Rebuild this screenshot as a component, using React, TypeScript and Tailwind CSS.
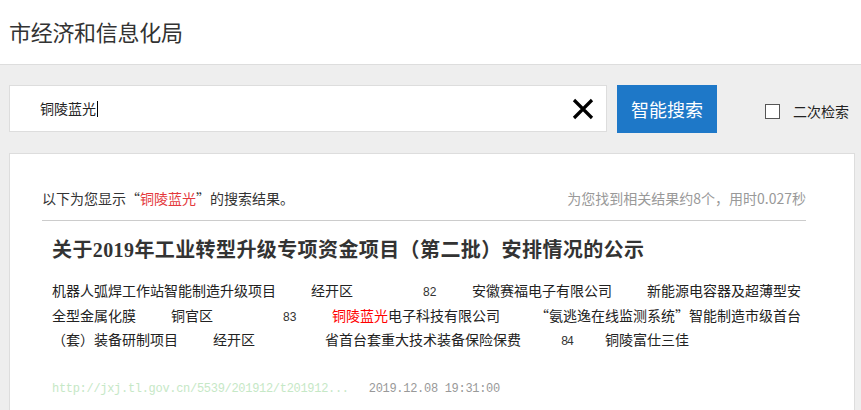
import React from "react";

const cjk = "font-['Microsoft_YaHei','Noto_Sans_CJK_SC',sans-serif]";

const Num = ({ children, w, ml, small }: { children: React.ReactNode; w: string; ml: string; small?: boolean }) => (
  <span
    className={`${ml} ${w} inline-block shrink-0 ${
      small ? "font-['Liberation_Mono',monospace] text-[12px] tracking-[-1.5px]" : "font-['Liberation_Sans',sans-serif] text-[12px]"
    } text-[#333]`}
  >
    {children}
  </span>
);

const App = () => {
  return (
    <div className={`w-[861px] h-[410px] overflow-hidden bg-[#eeeeee] ${cjk} text-[#333]`}>
      {/* header */}
      <div className="h-[65px] bg-white border-b border-[#dddddd] px-[9px] flex items-center">
        <h1 className="text-[22px] text-[#333] tracking-[-0.3px] pb-[1px]">市经济和信息化局</h1>
      </div>

      {/* search bar */}
      <div className="flex items-start px-[9px] mt-[20px]">
        <div className="w-[598px] h-[47px] bg-white border border-[#dddddd] flex items-center pl-[30px] pr-[12px]">
          <span className="text-[14px] text-[#222]">铜陵蓝光</span>
          <span className="w-px h-[16px] bg-black ml-px" />
          <div className="flex-1" />
          <svg width="22" height="22" viewBox="0 0 22 22">
            <path d="M2 2 L20 20 M20 2 L2 20" stroke="#000" strokeWidth="3.2" />
          </svg>
        </div>
        <button className="ml-[10px] w-[100px] h-[48px] bg-[#1e78c8] text-white text-[18px] flex items-center justify-center">
          智能搜索
        </button>
        <div className="ml-[48px] mt-[16px] flex items-center">
          <span className="w-[15px] h-[15px] border border-[#555] bg-white" />
          <span className="ml-[13px] text-[14px] text-[#222]">二次检索</span>
        </div>
      </div>

      {/* result card */}
      <div className="ml-[9px] mt-[20px] w-[846px] h-[300px] bg-white border border-[#dddddd] pl-[32px] pt-[34px]">
        <div className="w-[764px] flex justify-between items-center pb-[12px] border-b border-[#cccccc] text-[14px] leading-[20px]">
          <span className="text-[#333]">
            以下为您显示“<span className="text-[#e4393c]">铜陵蓝光</span>”的搜索结果。
          </span>
          <span className="text-[#999]">为您找到相关结果约8个，用时0.027秒</span>
        </div>

        <div className="pl-[10px]">
          <h2 className="mt-[15px] text-[20px] leading-[28px] font-bold tracking-[0.4px] text-[#333] font-['Liberation_Serif','Noto_Sans_CJK_SC',serif] whitespace-nowrap">
            关于2019年工业转型升级专项资金项目（第二批）安排情况的公示
          </h2>

          <div className="mt-[15px] text-[14px] leading-[22.5px] text-[#222] whitespace-nowrap">
            <div className="flex items-baseline">
              <span>机器人弧焊工作站智能制造升级项目</span>
              <span className="ml-[35px]">经开区</span>
              <Num ml="ml-[70px]" w="w-[14px]">82</Num>
              <span className="ml-[35px]">安徽赛福电子有限公司</span>
              <span className="ml-[35px]">新能源电容器及超薄型安</span>
            </div>
            <div className="flex items-baseline">
              <span>全型金属化膜</span>
              <span className="ml-[35px]">铜官区</span>
              <Num ml="ml-[70px]" w="w-[14px]">83</Num>
              <span className="ml-[35px]">
                <span className="text-[#ff0000]">铜陵蓝光</span>电子科技有限公司
              </span>
              <span className="ml-[35px]">“氨逃逸在线监测系统”智能制造市级首台</span>
            </div>
            <div className="flex items-baseline">
              <span>（套）装备研制项目</span>
              <span className="ml-[35px]">经开区</span>
              <span className="ml-[70px]">省首台套重大技术装备保险保费</span>
              <Num ml="ml-[40px]" w="w-[9px]" small>
                84
              </Num>
              <span className="ml-[35px]">铜陵富仕三佳</span>
            </div>
          </div>

          <div className="mt-[27px] flex items-center font-['Liberation_Mono',monospace] text-[12px] tracking-[-0.3px] leading-[16px] whitespace-nowrap">
            <span className="text-[#c6e8c6]">http://jxj.tl.gov.cn/5539/201912/t201912...</span>
            <span className="ml-[20px] text-[#999]">2019.12.08 19:31:00</span>
          </div>
        </div>
      </div>
    </div>
  );
};

export default App;
